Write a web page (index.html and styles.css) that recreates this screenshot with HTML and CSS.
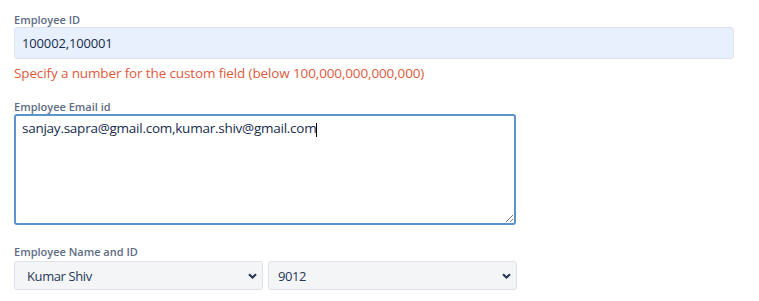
FILE: index.html
```html
<!DOCTYPE html>
<html lang="en">
<head>
    <meta charset="UTF-8">
    <meta name="viewport" content="width=device-width, initial-scale=1.0">
    <title>Employee Fields</title>
    <link rel="stylesheet" href="styles.css">
</head>
<body>
    <form class="form">
        <div class="field">
            <label class="label" for="emp-id">Employee ID</label>
            <input id="emp-id" type="text" class="input-field input-wide" value="100002,100001">
            <p class="error">Specify a number for the custom field (below 100,000,000,000,000)</p>
        </div>
        <div class="field field-email">
            <label class="label">Employee Email id</label>
            <div class="textarea-box">sanjay.sapra@gmail.com,kumar.shiv@gmail.com<span class="caret"></span>
                <svg class="grip" width="8" height="8" viewBox="0 0 8 8"><path d="M1 8L8 1M5 8L8 5" stroke="#777" stroke-width="1"/></svg>
            </div>
        </div>
        <div class="field">
            <label class="label">Employee Name and ID</label>
            <div class="select-row">
                <div class="select-box select-name">
                    <span>Kumar Shiv</span>
                    <svg class="chevron" width="9" height="6" viewBox="0 0 9 6"><path d="M1 1.2L4.5 4.5L8 1.2" fill="none" stroke="#253858" stroke-width="2.2"/></svg>
                </div>
                <div class="select-box select-id">
                    <span>9012</span>
                    <svg class="chevron" width="9" height="6" viewBox="0 0 9 6"><path d="M1 1.2L4.5 4.5L8 1.2" fill="none" stroke="#253858" stroke-width="2.2"/></svg>
                </div>
            </div>
        </div>
    </form>
</body>
</html>
```

FILE: styles.css
```css
body {
    margin: 0;
    background-color: #ffffff;
    font-family: "Open Sans", "Noto Sans", sans-serif;
    color: #172b4d;
}
.form {
    padding: 12px 0 0 14px;
}
.field {
    margin-bottom: 17px;
}
.field-email {
    margin-bottom: 19px;
}
.label {
    display: block;
    font-size: 11px;
    font-weight: 600;
    color: #5e6c84;
    line-height: 15px;
    height: 15px;
}
.input-field {
    box-sizing: border-box;
    display: block;
    font-family: inherit;
    font-size: 13px;
    letter-spacing: -0.15px;
    color: #172b4d;
    background-color: #e8f0fe;
    border: 1px solid #dde3ec;
    border-radius: 3px;
    padding: 0 7px;
    height: 32px;
    outline: none;
}
.input-wide {
    width: 720px;
}
.error {
    margin: 5px 0 0;
    font-size: 13.5px;
    letter-spacing: -0.13px;
    line-height: 18px;
    color: #de5a3c;
}
.textarea-box {
    position: relative;
    box-sizing: border-box;
    width: 502px;
    height: 111px;
    border: 2px solid #5b93cb;
    border-radius: 3px;
    padding: 2px 6px;
    font-size: 13.5px;
    letter-spacing: -0.25px;
    line-height: 20px;
    color: #172b4d;
}
.caret {
    display: inline-block;
    width: 1px;
    height: 14px;
    background-color: #000;
    vertical-align: -4px;
}
.grip {
    position: absolute;
    right: 1px;
    bottom: 1px;
}
.select-row {
    display: flex;
    gap: 5px;
    margin-top: 2px;
}
.select-box {
    box-sizing: border-box;
    display: flex;
    align-items: center;
    justify-content: space-between;
    width: 249px;
    height: 29px;
    padding: 0 5px 0 12px;
    background-color: #f4f5f7;
    border: 1px solid #dfe1e6;
    border-radius: 3px;
    font-size: 13px;
    letter-spacing: -0.4px;
    color: #253858;
}
.select-id {
    padding-left: 9px;
}
```
